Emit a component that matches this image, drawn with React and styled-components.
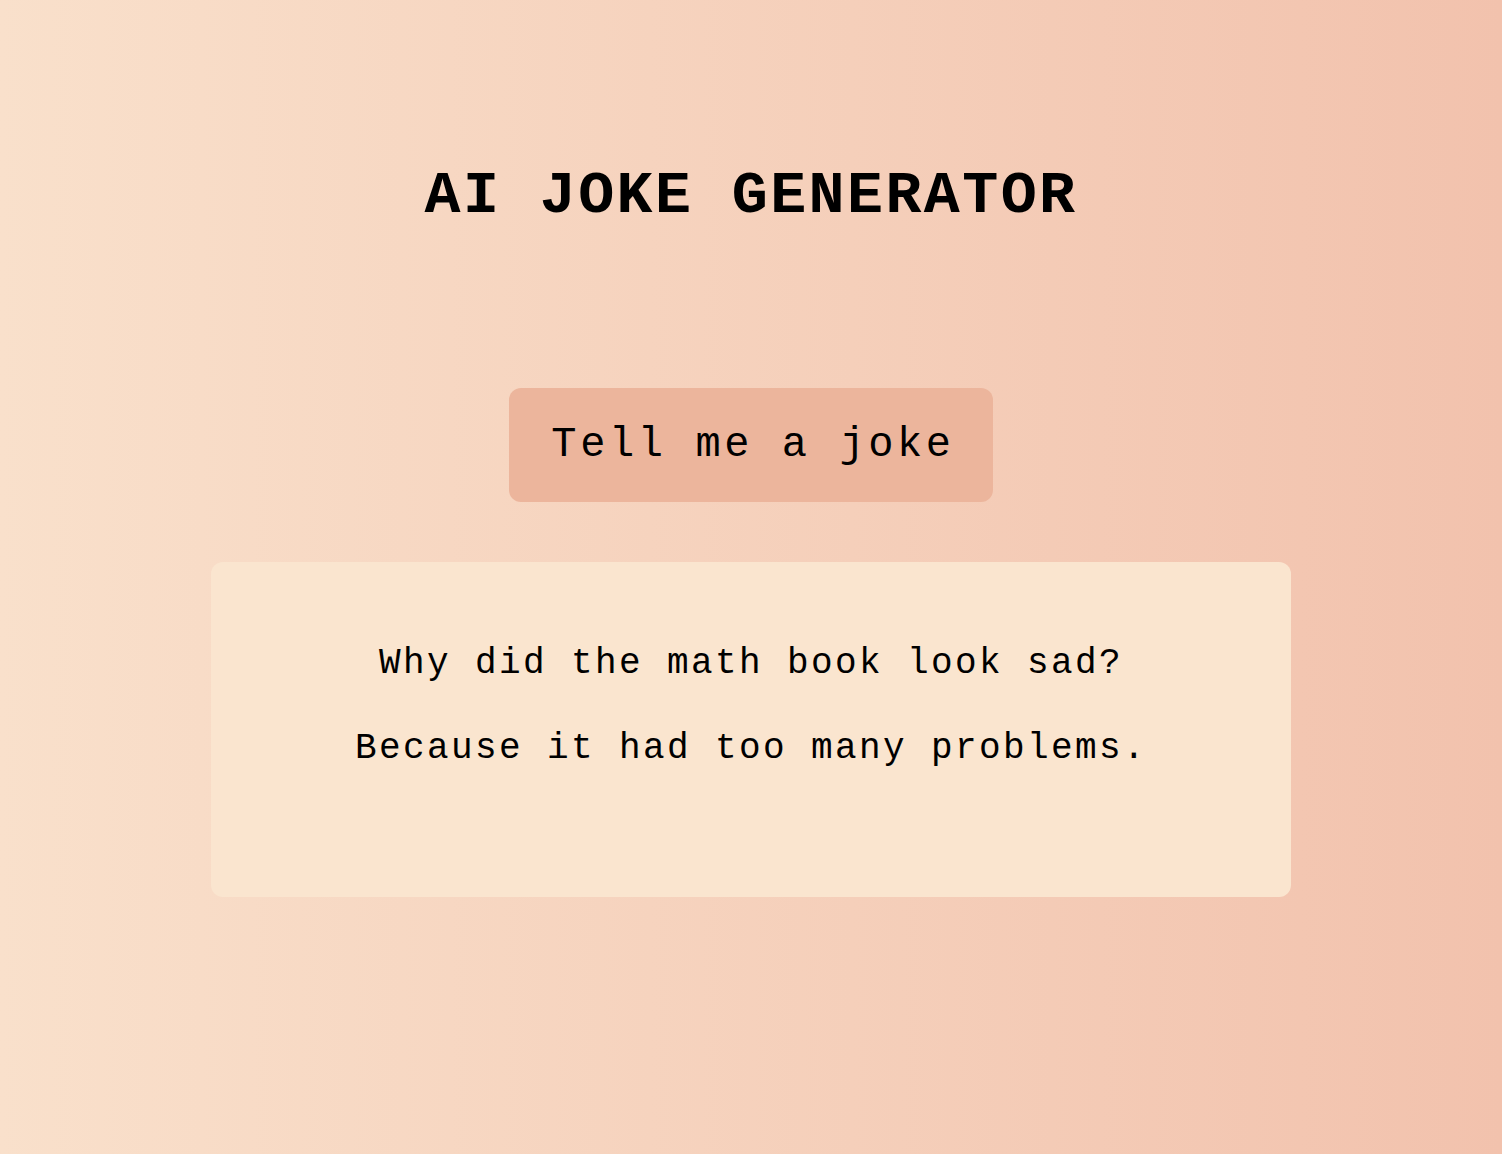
import React from "react";
import styled, { createGlobalStyle } from "styled-components";

const Global = createGlobalStyle`
  html, body { margin: 0; padding: 0; }
  body {
    min-height: 100vh;
    background: linear-gradient(to right, #f9e0cb, #f2c2ad);
    font-family: "Liberation Mono", "Courier New", monospace;
    color: #000;
  }
`;

const Page = styled.main`
  min-height: 100vh;
  box-sizing: border-box;
  display: flex;
  flex-direction: column;
  align-items: center;
  padding-top: 162px;
`;

const Title = styled.h1`
  margin: 0;
  font-size: 60px;
  line-height: 68px;
  font-weight: 700;
  letter-spacing: 2.4px;
`;

const JokeButton = styled.button`
  margin-top: 158px;
  height: 114px;
  box-sizing: border-box;
  border: none;
  border-radius: 12px;
  background: #ecb59c;
  color: #000;
  font-family: inherit;
  font-size: 42px;
  line-height: normal;
  letter-spacing: 3.6px;
  padding: 0 38px 0 42px;
  cursor: pointer;
`;

const Card = styled.section`
  margin-top: 60px;
  width: 1080px;
  min-height: 335px;
  box-sizing: border-box;
  background: #fae5cf;
  border-radius: 12px;
  padding: 75px 40px 40px;
  display: flex;
  flex-direction: column;
  align-items: center;
  gap: 32px;
`;

const Line = styled.p`
  margin: 0;
  font-size: 36px;
  line-height: 53px;
  letter-spacing: 2.4px;
  text-align: center;
`;

export default function App() {
  return (
    <>
      <Global />
      <Page>
        <Title>AI JOKE GENERATOR</Title>
        <JokeButton>Tell me a joke</JokeButton>
        <Card>
          <Line>Why did the math book look sad?</Line>
          <Line>Because it had too many problems.</Line>
        </Card>
      </Page>
    </>
  );
}
